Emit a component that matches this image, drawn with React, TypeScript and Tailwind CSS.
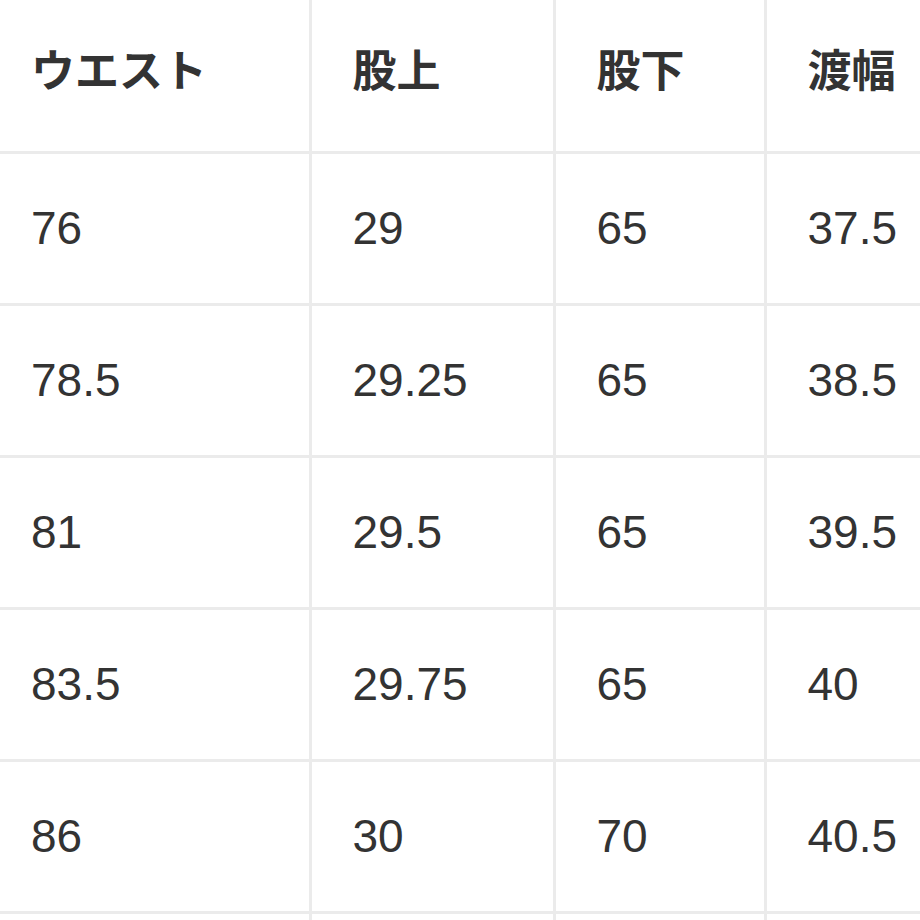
const headers = ['ウエスト', '股上', '股下', '渡幅'];

const rows = [
  ['76', '29', '65', '37.5'],
  ['78.5', '29.25', '65', '38.5'],
  ['81', '29.5', '65', '39.5'],
  ['83.5', '29.75', '65', '40'],
  ['86', '30', '70', '40.5'],
];

export default function App() {
  return (
    <div className="h-[920px] w-[920px] overflow-hidden bg-white">
      <table
        className="-ml-[10px] w-[1040px] table-fixed border-collapse text-[46px] leading-none text-[#333]"
        style={{ fontFamily: '"Liberation Sans", "Noto Sans CJK JP", sans-serif' }}
      >
        <colgroup>
          <col className="w-[320px]" />
          <col className="w-[244px]" />
          <col className="w-[211px]" />
          <col />
        </colgroup>
        <thead>
          <tr className="h-[152px]">
            {headers.map((h) => (
              <th
                key={h}
                className="border-r-[3px] border-b-[3px] border-[#ebebeb] pl-[41px] text-left align-middle text-[44px] font-bold"
              >
                <span className="relative -top-[3px]">{h}</span>
              </th>
            ))}
          </tr>
        </thead>
        <tbody>
          {rows.map((r, i) => (
            <tr key={i} className="h-[152px]">
              {r.map((v, j) => (
                <td
                  key={j}
                  className="border-r-[3px] border-b-[3px] border-[#ebebeb] pl-[41px] align-middle font-normal"
                >
                  {v}
                </td>
              ))}
            </tr>
          ))}
          <tr className="h-[40px]">
            {headers.map((h) => (
              <td key={h} className="border-r-[3px] border-[#ebebeb]" />
            ))}
          </tr>
        </tbody>
      </table>
    </div>
  );
}
